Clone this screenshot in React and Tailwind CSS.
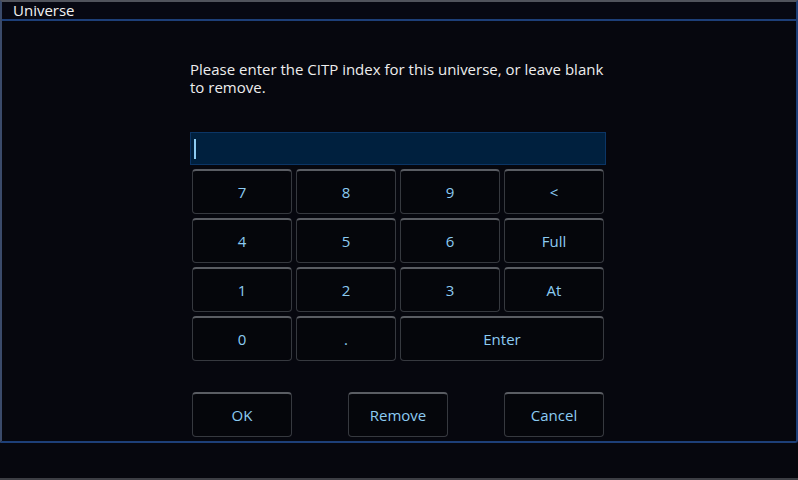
export default function App() {
  const keys = [
    ['7', '8', '9', '<'],
    ['4', '5', '6', 'Full'],
    ['1', '2', '3', 'At'],
  ];

  const btn =
    'flex items-center justify-center h-[45px] rounded-[4px] bg-[#05060b] border border-[#36393f] border-t-[#5a5d63] border-t-2 text-[#8ccbf2] text-[15px]';

  return (
    <div
      className="w-[798px] h-[480px] bg-[#06070e] flex flex-col overflow-hidden"
      style={{ fontFamily: '"Open Sans", "Noto Sans", sans-serif' }}
    >
      {/* window */}
      <div className="h-[443px] flex flex-col border-t-2 border-t-[#50535c] border-l-2 border-l-[#3a4a6a] border-r-2 border-r-[#1d3f78] border-b-2 border-b-[#1d3f78] rounded-br-[3px]">
        <div className="h-[19px] flex items-center pl-[11px] text-[15px] text-[#f2f2f2] leading-none border-b-2 border-b-[#1d3f78] bg-[#070812]">
          Universe
        </div>
        <div className="flex-1 flex flex-col pl-[188px] w-[606px] box-content">
          <p className="mt-[39px] text-[15px] leading-[18px] text-[#ededed] w-[416px]">
            Please enter the CITP index for this universe, or leave blank to remove.
          </p>
          <div className="mt-[36px] h-[33px] w-[416px] bg-[#00203e] border border-[#0b3565] flex items-center pl-[3px]">
            <div className="w-[2px] h-[20px] bg-[#8ccbf2]" />
          </div>
          <div className="mt-[4px] ml-[2px] w-[412px] grid grid-cols-4 gap-x-[4px] gap-y-[4px]">
            {keys.flat().map((k) => (
              <div key={k} className={btn}>
                {k}
              </div>
            ))}
            <div className={btn}>0</div>
            <div className={btn}>.</div>
            <div className={btn + ' col-span-2'}>Enter</div>
          </div>
          <div className="mt-[31px] ml-[2px] w-[412px] flex justify-between">
            <div className={btn + ' w-[100px]'}>OK</div>
            <div className={btn + ' w-[100px]'}>Remove</div>
            <div className={btn + ' w-[100px]'}>Cancel</div>
          </div>
        </div>
      </div>
      <div className="flex-1" />
      <div className="h-[2px] bg-[#3c3e44]" />
    </div>
  );
}
